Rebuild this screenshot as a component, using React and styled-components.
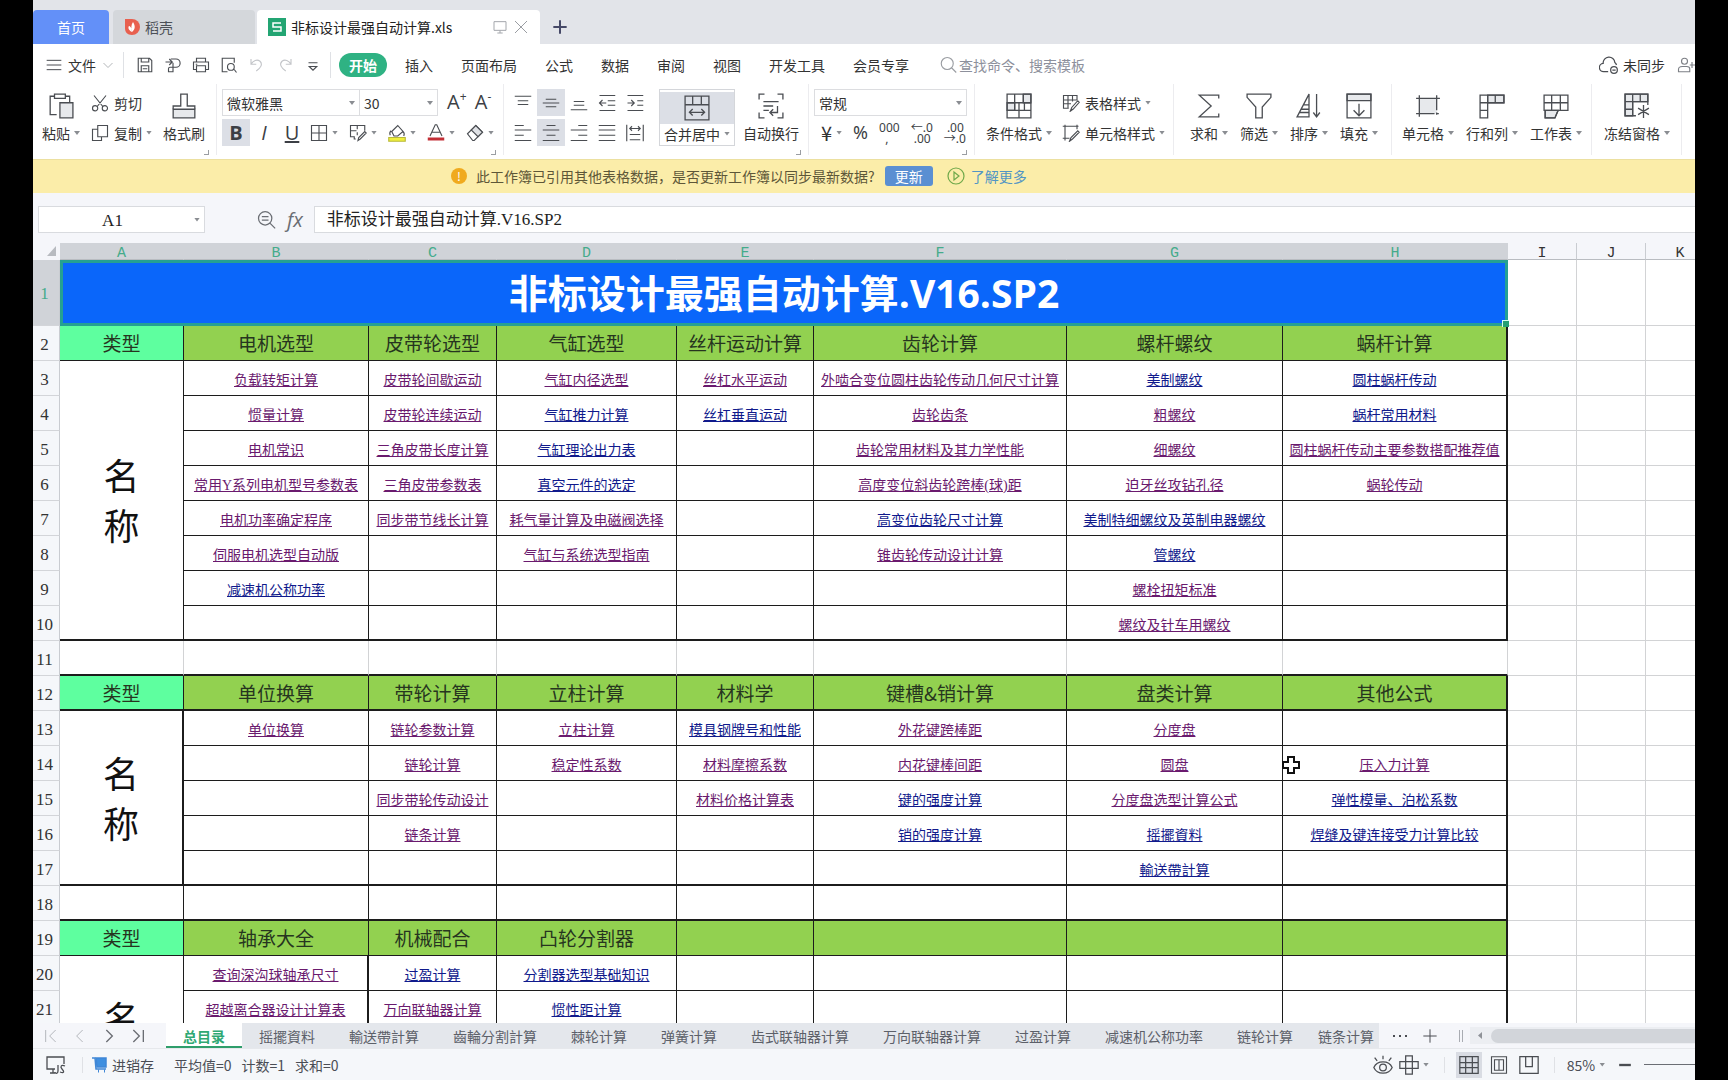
import React from "react";
import styled, { createGlobalStyle, css } from "styled-components";

const GlobalStyle = createGlobalStyle`
    * {
        box-sizing: border-box;
    }
    body {
        margin: 0;
        background: #000;
        color: #333;
        font-family: "Noto Sans CJK SC", "Open Sans", sans-serif;
        font-size: 14px;
        line-height: 20px;
    }
    button, input, select {
        margin: 0;
        padding: 0;
        border: 0;
        background: none;
        color: inherit;
        font: inherit;
    }
    button {
        white-space: nowrap;
    }
`;

const Window = styled.main`
    display: flex;
    flex-direction: column;
    height: 100vh;
    margin: 0 33px;
    overflow: hidden;
    background: #fff;
`;

/* ---------- shared bits ---------- */

const Svg = styled.svg`
    display: block;
    flex: none;
    width: ${p => p.$size || 18}px;
    height: ${p => p.$size || 18}px;
    fill: none;
    stroke: ${p => p.$color || "#4a4d52"};
    stroke-width: ${p => p.$weight || 1.5};
`;

const Caret = styled.i`
    flex: none;
    width: 6px;
    height: 4px;
    margin-left: 4px;
    background: #8a8d92;
    clip-path: polygon(0 0, 100% 0, 50% 100%);
`;

const Divider = styled.span`
    flex: none;
    width: 1px;
    height: ${p => p.$h || 26}px;
    background: #dfe1e5;
`;

const icons = {
    save: <path d="M3 3h15l3 3v15H3zM7 3v5h10V3M7 21v-8h10v8M9 17h6" />,
    exportPdf: <path d="M2 8h8M7 4l4 4-4 4M9 4h7a5.500 5.500 0 0 1 0 11h-4v6H6v-4a2 2 0 0 1 2-2h4V9" />,
    print: <path d="M6 8V3h12v5M6 18H2V8h20v10h-4M6 13h12v8H6zM5 11h2" />,
    preview: <path d="M10 21H3V3h16v6M19 18l3 4M19 14.500a4.500 4.500 0 1 1-9 0 4.500 4.500 0 0 1 9 0z" />,
    undo: <path d="M4 4v7h7M4 11c3-5 8-7 12-4 4 4 1 9-5 13" />,
    redo: <path d="M20 4v7h-7M20 11c-3-5-8-7-12-4-4 4-1 9 5 13" />,
    more: <path d="M6 9h12M7 14l5 5 5-5z" />,
    menu: <path d="M1 5h22M1 12h22M1 19h22" />,
    chevron: <path d="M3 8l9 9 9-9" />,
    search: <path d="M19 10a8 8 0 1 1-16 0 8 8 0 0 1 16 0zM17 16l6 6" />,
    cloud: <path d="M11 20H6a5 5 0 0 1-1-10 7 7 0 0 1 14-1 5 5 0 0 1 2 3M22 18a4 4 0 1 1-8 0 4 4 0 0 1 8 0zM16 18h4" />,
    person: <path d="M14 7a4 4 0 1 1-8 0 4 4 0 0 1 8 0zM2 21v-3c0-3 3-4 5-4h6c2 0 4 1 4 3v4zM17 12h7M20 8v8" />,
    screen: <path d="M3 4h18v13H3zM8 21h8M12 17v4" />,
    close: <path d="M3 3l18 18M21 3L3 21" />,
    plus: <path d="M12 2v20M2 12h20" />,
    paste: (
        <>
            <path d="M8 20H2V3h4M16 3h4v6M6 1h10v4H6z" />
            <path d="M11 9h12v14H11z" fill="#e7e9ec" />
        </>
    ),
    cut: <path d="M4 2l12 15M20 2L8 17M9 19a3.500 3.500 0 1 1-7 0 3.500 3.500 0 0 1 7 0zM22 19a3.500 3.500 0 1 1-7 0 3.500 3.500 0 0 1 7 0z" />,
    copy: <path d="M9 2h13v15H9zM9 7H2v15h12v-5" />,
    brush: (
        <>
            <path d="M2 15h20v8H2z" fill="#e7e9ec" />
            <path d="M2 15v-3h7V1h6v11h7v3" />
        </>
    ),
    borders: <path d="M2 2h20v20H2zM12 2v20M2 12h20" />,
    drawBorder: <path d="M9 20H7v-3H2V2h19v7M2 9h8M11 2v5M11 11v4M12 22l1-4 8-8 2 2-8 8z" />,
    fill: (
        <>
            <path d="M5 10l8-8 7 8-7 6H8zM20 10c2 2 2 4 1 6M4 9c-2 2-2 4-1 6" />
            <path d="M1 18h22v5H1z" fill="#f0f03c" stroke="#b8b83a" />
        </>
    ),
    fontColor: (
        <>
            <path d="M4 16l7-15h2l7 15M7 11h10" />
            <path d="M1 18h22v4H1z" fill="#c22f36" stroke="none" />
        </>
    ),
    eraser: (
        <>
            <path d="M2 13L13 2l9 9-11 11H9z" />
            <path d="M13 2l9 9-6 6-9-9z" fill="#dfe1e5" />
        </>
    ),
    alignTop: <path d="M1 3h22M5 9h14M5 14h14" />,
    alignMiddle: <path d="M5 7h14M1 12h22M5 17h14" />,
    alignBottom: <path d="M5 10h14M5 15h14M1 21h22" />,
    outdent: <path d="M2 2h21M13 9h10M13 15h10M2 22h21M11 12H2M6 8l-4 4 4 4" />,
    indent: <path d="M2 2h21M15 9h8M15 15h8M2 22h21M2 12h9M7 8l4 4-4 4" />,
    alignLeft: <path d="M1 2h12M1 8h22M1 15h12M1 22h22" />,
    alignCenter: <path d="M6 2h12M1 8h22M6 15h12M1 22h22" />,
    alignRight: <path d="M11 2h12M1 8h22M11 15h12M1 22h22" />,
    justify: <path d="M1 2h22M1 8h22M1 15h22M1 22h22" />,
    distribute: <path d="M1 1v22M23 1v22M5 14h14M5 21h14M5 6h14M8 3L5 6l3 3M16 3l3 3-3 3" />,
    merge: <path d="M1 1h22v22H1zM1 9h22M8 1v8M16 1v8M5 16h14M8 13l-3 3 3 3M16 13l3 3-3 3" />,
    wrap: <path d="M6 1H1v5M18 1h5v5M6 23H1v-5M18 23h5v-5M5 8h14M5 12h9M5 16h5M18 12v6h-6M14 15l-3 3 3 3" />,
    condition: (
        <>
            <path d="M1 9h7v7H1zM16 1h7v8h-7z" fill="#e7e9ec" />
            <path d="M1 1h22v22H1zM1 9h22M1 16h22M8 1v15M16 1v8M12 9v7M12 16v7M17 9v7" />
        </>
    ),
    tableStyle: <path d="M9 19H2V2h18v6M2 8h18M2 13h10M8 2v17M14 2v8M11 23l2-5 8-9 2 2-8 9z" />,
    cellStyle: <path d="M1 3h21M4 1v21M1 19h9M20 1v6M10 23l2-5 9-9 2 2-9 9z" />,
    sum: <path d="M21 5V2H3l11 10L3 22h18v-3" />,
    filter: <path d="M1 1h22v3l-8 9v10H9V13L1 4z" />,
    sort: <path d="M1 22L12 1v21zM7 11h5M5 15h7M3 18h9M19 1v21M16 18l3 4 3-4" />,
    fillDown: (
        <>
            <path d="M1 1h22v6H1z" fill="#e7e9ec" />
            <path d="M1 1h22v22H1zM12 10v10M7 16l5 5 5-5" />
        </>
    ),
    cell: (
        <>
            <path d="M4 5h16v14H4z" fill="#e7e9ec" stroke="none" />
            <path d="M1 5h22M1 19h17M4 2v20M20 2v14M20 18v2M22 19h-2" />
        </>
    ),
    rowCol: (
        <>
            <path d="M8 2h15v7H8z" fill="#e7e9ec" />
            <path d="M1 2h22v7H8v14H1zM1 9h7M1 16h7M8 2v7M15 2v7" />
        </>
    ),
    sheet: (
        <>
            <path d="M2 16h12l-3 7H2z" fill="#e7e9ec" />
            <path d="M1 2h22v14H1zM1 9h22M8 2v14M16 2v14M2 16v7h9l3-7" />
        </>
    ),
    freeze: (
        <>
            <path d="M1 1h21v7H8v13H1z" fill="#e7e9ec" />
            <path d="M22 11V1H1v20h10M1 8h21M1 15h7M8 1v20M15 1v7M18 11v12M13 14l10 6M23 14l-10 6" />
        </>
    ),
    zoomOut: <path d="M19 10a8 8 0 1 1-16 0 8 8 0 0 1 16 0zM17 16l6 6M7 8h8M7 12h8" />,
    first: <path d="M4 3v18M19 3l-9 9 9 9" />,
    prev: <path d="M16 3l-9 9 9 9" />,
    next: <path d="M8 3l9 9-9 9" />,
    last: <path d="M20 3v18M5 3l9 9-9 9" />,
    eye: (
        <path d="M1 15c4-9 18-9 22 0-4 9-18 9-22 0zM16 15a4 4 0 1 1-8 0 4 4 0 0 1 8 0zM12 5V1M5 7L2 3M19 7l3-4" />
    ),
    cross: <path d="M8 1h8v22H8zM1 8h22v8H1z" />,
    grid: <path d="M1 2h22v20H1zM1 9h22M1 15h22M8 2v20M16 2v20" />,
    page: <path d="M2 1h20v22H2zM6 5h12v14H6zM12 5v14" />,
    split: <path d="M1 2h22v20H1zM8 2v12h8V2" />,
    minus: <path d="M2 12h20" />,
};

function Icon({ name, size, color, weight }) {
    return (
        <Svg viewBox="0 0 24 24" $size={size} $color={color} $weight={weight} aria-hidden="true">
            {icons[name]}
        </Svg>
    );
}

/* ---------- document tabs ---------- */

const TabStrip = styled.nav`
    display: flex;
    align-items: flex-end;
    flex: none;
    height: 44px;
    background: #e2e4e9;
`;

const DocTab = styled.button`
    display: flex;
    align-items: center;
    height: 34px;
    padding: 0 11px;
    gap: 5px;
    border-radius: 4px 4px 0 0;
    background: #d4d7db;
    color: #4c5057;
    width: ${p => p.$width}px;
    margin-right: ${p => p.$after || 0}px;

    ${p => p.$kind === "home" && css`
        justify-content: center;
        background: #6390f8;
        color: #fff;
    `}
    ${p => p.$kind === "active" && css`
        background: #fff;
        color: #222;
    `}
`;

const TabName = styled.span`
    flex: 1;
    text-align: left;
`;

const NewTab = styled.button`
    display: flex;
    align-items: center;
    height: 34px;
    padding: 0 12px;
`;

/* ---------- menu ---------- */

const MenuBar = styled.div`
    display: flex;
    align-items: center;
    flex: none;
    height: 40px;
    padding: 2px 0 0 13px;
    overflow: hidden;
`;

const FileButton = styled.button`
    display: flex;
    align-items: center;
    gap: 6px;
    margin-right: 9px;
`;

const QuickTools = styled.div`
    display: flex;
    align-items: center;
    gap: 10px;
    padding: 0 8px 0 12px;
`;

const QuickButton = styled.button`
    display: flex;
`;

const Menus = styled.div`
    display: flex;
    gap: 28px;
    margin-left: 18px;
`;

const MenuItem = styled.button`
    line-height: 24px;
    ${p => p.$active && css`
        margin: 0 -10px;
        padding: 0 10px;
        border-radius: 12px;
        background: #2fb283;
        color: #fff;
        font-weight: bold;
    `}
`;

const Search = styled.label`
    display: flex;
    align-items: center;
    flex: 1;
    gap: 2px;
    margin-left: 30px;

    input {
        width: 200px;
        outline: none;
    }
    input::placeholder {
        color: #8d909c;
        opacity: 1;
    }
`;

const Sync = styled.button`
    display: flex;
    align-items: center;
    gap: 4px;
    margin-right: 12px;
`;

/* ---------- ribbon ---------- */

const Ribbon = styled.div`
    display: flex;
    flex: none;
    height: 75px;
    overflow: hidden;
`;

const Group = styled.section`
    position: relative;
    display: flex;
    flex: none;
    gap: ${p => p.$gap || 0}px;
    height: 71px;
    padding: 5px ${p => p.$right}px 0 ${p => p.$left}px;
    border-right: 1px solid #ececef;
`;

const Corner = styled.i`
    position: absolute;
    right: 7px;
    bottom: 0;
    width: 5px;
    height: 5px;
    border: solid #9a9da2;
    border-width: 0 1px 1px 0;
`;

const BigTool = styled.button`
    display: flex;
    flex-direction: column;
    align-items: center;
    height: 57px;
    padding-top: 4px;
`;

const BigLabel = styled.span`
    display: flex;
    align-items: center;
    margin-top: 4px;
`;

const MergeTool = styled.button`
    width: 76px;
    height: 57px;
    margin: 0 8px 0 10px;
    border: 1px solid #d4d6da;
    background: #fff;
`;

const MergeTop = styled.span`
    display: flex;
    justify-content: center;
    padding: 3px 0;
    background: #dcdfe6;
`;

const MergeLabel = styled.span`
    display: flex;
    align-items: center;
    justify-content: center;
`;

const Stack = styled.div`
    display: flex;
    flex-direction: column;
    gap: 3px;
`;

const Line = styled.div`
    display: flex;
    align-items: center;
    height: 27px;
    gap: ${p => p.$gap || 0}px;
    padding-left: ${p => p.$left || 0}px;
`;

const SmallTool = styled.button`
    display: flex;
    align-items: center;
`;

const SmallLabel = styled.span`
    margin-left: 5px;
`;

const SizeTool = styled.button`
    width: 18px;
`;

const Toggle = styled.button`
    display: flex;
    align-items: center;
    justify-content: center;
    width: 28px;
    height: 27px;
    background: ${p => (p.$on ? "#dcdfe6" : "none")};
`;

const Letter = styled.span`
    font-family: "Open Sans", sans-serif;
    font-size: 20px;
    color: #3c3f45;
    font-weight: ${p => (p.$bold ? 700 : 400)};
    font-style: ${p => (p.$italic ? "italic" : "normal")};
    text-decoration: ${p => (p.$underline ? "underline" : "none")};

    sup {
        font-size: 12px;
        line-height: 1px;
    }
`;

const Combo = styled.label`
    position: relative;
    display: flex;
    width: ${p => p.$width}px;
    height: 27px;
    border: 1px solid #dcdde0;
    margin-right: ${p => (p.$joined ? -1 : 0)}px;

    select {
        appearance: none;
        flex: 1;
        padding: 0 4px;
        outline: none;
    }
    i {
        position: absolute;
        right: 4px;
        top: 11px;
    }
`;

const NumTool = styled.button`
    color: #3c3f45;
    font-family: "Noto Sans", "Noto Sans CJK SC", sans-serif;
    font-size: ${p => p.$size || 12}px;
    line-height: 11px;
    text-align: left;
    white-space: pre;
`;

const Yen = styled.span`
    font-size: 20px;
`;

/* ---------- update notice ---------- */

const Notice = styled.div`
    display: flex;
    align-items: center;
    flex: none;
    height: 34px;
    padding: 0 0 2px 418px;
    border-top: 1px solid #ece0a0;
    background: #fbeda9;
    color: #5e5738;
    white-space: nowrap;
`;

const Alert = styled.span`
    width: 16px;
    height: 16px;
    margin-right: 9px;
    border-radius: 8px;
    background: #f0aa1e;
    color: #fff;
    font-size: 12px;
    line-height: 16px;
    text-align: center;
`;

const UpdateButton = styled.button`
    width: 48px;
    height: 20px;
    margin: 0 14px 0 10px;
    border-radius: 3px;
    background: #5a8fd2;
    color: #fff;
`;

const LearnMore = styled.a`
    display: flex;
    align-items: center;
    gap: 6px;
    color: #5295c4;
    text-decoration: none;
`;

/* ---------- formula bar ---------- */

const FormulaBar = styled.div`
    display: flex;
    align-items: center;
    flex: none;
    height: 50px;
    padding: 3px 0 0 5px;
    background: #f5f6fa;
`;

const NameBox = styled.label`
    display: flex;
    align-items: center;
    width: 167px;
    height: 27px;
    margin-right: 51px;
    padding-right: 4px;
    border: 1px solid #d9dbdf;
    background: #fff;

    input {
        flex: 1;
        min-width: 0;
        padding: 2px 4px 0 0;
        color: #222;
        font: 17px "Liberation Serif", serif;
        text-align: center;
        outline: none;
    }
`;

const Fx = styled.button`
    margin: 0 11px;
    color: #6a6d73;
    font: italic 20px "Open Sans", sans-serif;
`;

const FormulaInput = styled.input`
    && {
        flex: 1;
        height: 27px;
        padding: 0 12px 4px;
        border: 1px solid #d9dbdf;
        border-right: 0;
        background: #fff;
        color: #222;
        font: 17px "Liberation Serif", "Noto Sans CJK SC", serif;
        outline: none;
    }
`;

/* ---------- sheet ---------- */

const SheetArea = styled.div`
    position: relative;
    flex: 1;
    min-height: 0;
    overflow: hidden;
    background: #fff;
`;

const Sheet = styled.table`
    width: 1682px;
    table-layout: fixed;
    border-collapse: separate;
    border-spacing: 0;
`;

const ColHead = styled.th`
    height: 17px;
    padding: 6px 0 0;
    border-right: 1px solid ${p => (p.$on ? "#d0d3d8" : "#c9ccd1")};
    border-bottom: 1px solid #b9bcc1;
    background: ${p => (p.$on ? "#d0d3d8" : "#f5f6fa")};
    color: ${p => (p.$on ? "#45ab8b" : "#333")};
    font: 15px/10px "Liberation Mono", monospace;
`;

const CornerHead = styled.th`
    height: 17px;
    padding: 2px 4px 3px 14px;
    background: #f5f6fa;

    i {
        display: block;
        height: 10px;
        background: #b8bbc0;
        clip-path: polygon(100% 0, 100% 100%, 0 100%);
    }
`;

const RowHead = styled.th`
    padding: 3px 3px 0 0;
    border-right: 1px solid #c9ccd1;
    border-bottom: 1px solid #d3d5d9;
    background: ${p => (p.$on ? "#d0d3d8" : "#f5f7fa")};
    color: ${p => (p.$on ? "#45ab8b" : "#333")};
    font: 17px/20px "Liberation Serif", serif;
`;

const TitleCell = styled.td`
    position: relative;
    height: 66px;
    padding: 0;
    border: 3px solid #25a093;
    background: #0a66fa;
    color: #fff;
    font: bold 39px/50px "Open Sans", "Noto Sans CJK SC", sans-serif;
    text-align: center;

    &::after {
        content: "";
        position: absolute;
        right: -4px;
        bottom: -4px;
        width: 6px;
        height: 6px;
        border: solid #d8fff0;
        border-width: 1px 0 0 1px;
        background: #25a073;
    }
`;

const Cell = styled.td`
    height: 35px;
    padding: 4px 0 0;
    border: solid ${p => (p.$grid ? "#d2d3d5" : "#1c1c1c")};
    border-width: 0 ${p => p.$right || 1}px ${p => p.$bottom || 1}px 0;
    border-bottom-color: ${p => (p.$plain ? "#d2d3d5" : "#1c1c1c")};
    text-align: center;
    white-space: nowrap;
`;

const HeadCell = styled(Cell)`
    padding: 0;
    background: ${p => (p.$first ? "#5eff9f" : "#92d150")};
    color: #26351f;
    font-size: 19px;
    line-height: 28px;
`;

const NameCell = styled(Cell)`
    padding: 6px 0 0;
    color: #111;
    font: 36px/50px "Liberation Serif", "Noto Sans CJK SC", serif;
`;

const CellLink = styled.a`
    color: ${p => (p.$fresh ? "#101a8c" : "#6a1a6e")};
    font: 14px/20px "Liberation Serif", "Noto Sans CJK SC", serif;
    text-decoration: underline;
    text-underline-offset: 1px;
`;

const Pointer = styled.svg`
    position: absolute;
    left: 1249px;
    top: 513px;
    width: 18px;
    height: 18px;
`;

/* ---------- bottom bars ---------- */

const SheetTabs = styled.nav`
    display: flex;
    flex: none;
    height: 25px;
    background: #f5f6fa;
`;

const TabNav = styled.div`
    display: flex;
    align-items: center;
    flex: none;
    gap: 13px;
    width: 133px;
    padding-left: 10px;

    button {
        display: flex;
    }
`;

const TabList = styled.div`
    display: flex;
    flex: 1;
    min-width: 0;
    overflow: hidden;
    background: #e4e7ec;

    button:last-child {
        padding: 0 8px;
    }
`;

const SheetTab = styled.button`
    flex: none;
    padding: 0 17px;
    color: #5c6069;
    line-height: 24px;

    ${p => p.$active && css`
        background: #fff;
        color: #2fa873;
        font-weight: bold;
        box-shadow: inset 0 -2px #2f9e6b;
    `}
`;

const TabTools = styled.div`
    display: flex;
    align-items: center;
    flex: none;
    width: 316px;
    padding-left: 14px;

    button {
        display: flex;
        margin-right: 15px;
    }
`;

const Grip = styled.i`
    width: 4px;
    height: 12px;
    margin: 0 7px 0 6px;
    border: solid #a9acb2;
    border-width: 0 1px;
`;

const ScrollTrack = styled.div`
    display: flex;
    align-items: center;
    flex: 1;
    gap: 9px;
    height: 17px;
    padding-left: 8px;
    background: #eceef2;
`;

const ScrollArrow = styled.i`
    width: 4px;
    height: 7px;
    background: #8f9298;
    clip-path: polygon(100% 0, 100% 100%, 0 50%);
`;

const ScrollThumb = styled.div`
    flex: 1;
    height: 14px;
    border-radius: 7px 0 0 7px;
    background: #d2d5da;
`;

const StatusBar = styled.footer`
    display: flex;
    align-items: center;
    flex: none;
    height: 32px;
    padding-left: 13px;
    overflow: hidden;
    border-top: 1px solid #e6e8ec;
    background: #f5f7fa;
    color: #4a4d55;
    white-space: nowrap;
`;

const Cart = styled.button`
    display: flex;
    align-items: center;
    gap: 4px;
    margin: 0 20px 0 9px;
`;

const Totals = styled.div`
    display: flex;
    flex: 1;
    gap: 10px;
`;

const ViewButton = styled.button`
    display: flex;
    align-items: center;
    justify-content: center;
    width: ${p => p.$width || 26}px;
    height: 26px;
    margin-left: ${p => p.$before || 0}px;
    background: ${p => (p.$on ? "#d9dce3" : "none")};
`;

const ZoomSlider = styled.input`
    && {
        appearance: none;
        flex: none;
        width: 51px;
        height: 1px;
        margin-left: 6px;
        background: #6b6e74;
    }
    &::-webkit-slider-thumb {
        appearance: none;
        width: 1px;
        height: 1px;
    }
`;

/* ---------- data ---------- */

const colWidths = [27, 124, 185, 128, 180, 137, 253, 216, 225, 69, 69, 69];
const letters = "ABCDEFGHIJK".split("");

// links that have not been opened yet start with "*"
const rows = [
    { n: 2, head: ["类型", "电机选型", "皮带轮选型", "气缸选型", "丝杆运动计算", "齿轮计算", "螺杆螺纹", "蜗杆计算"] },
    { n: 3, name: 8, cells: ["负载转矩计算", "皮带轮间歇运动", "气缸内径选型", "丝杠水平运动", "外啮合变位圆柱齿轮传动几何尺寸计算", "*美制螺纹", "*圆柱蜗杆传动"] },
    { n: 4, cells: ["惯量计算", "皮带轮连续运动", "*气缸推力计算", "*丝杠垂直运动", "齿轮齿条", "粗螺纹", "*蜗杆常用材料"] },
    { n: 5, cells: ["电机常识", "三角皮带长度计算", "*气缸理论出力表", "", "齿轮常用材料及其力学性能", "细螺纹", "圆柱蜗杆传动主要参数搭配推荐值"] },
    { n: 6, cells: ["常用Y系列电机型号参数表", "三角皮带参数表", "*真空元件的选定", "", "高度变位斜齿轮跨棒(球)距", "迫牙丝攻钻孔径", "蜗轮传动"] },
    { n: 7, cells: ["电机功率确定程序", "同步带节线长计算", "耗气量计算及电磁阀选择", "", "*高变位齿轮尺寸计算", "*美制特细螺纹及英制电器螺纹", ""] },
    { n: 8, cells: ["伺服电机选型自动版", "", "气缸与系统选型指南", "", "锥齿轮传动设计计算", "*管螺纹", ""] },
    { n: 9, cells: ["*减速机公称功率", "", "", "", "", "螺栓扭矩标准", ""] },
    { n: 10, thick: true, cells: ["", "", "", "", "", "螺纹及针车用螺纹", ""] },
    { n: 11, thick: true, gap: true, light: true },
    { n: 12, thick: true, head: ["类型", "单位换算", "带轮计算", "立柱计算", "材料学", "键槽&销计算", "盘类计算", "其他公式"] },
    { n: 13, name: 5, nameRight: 2, cells: ["单位换算", "链轮参数计算", "立柱计算", "*模具钢牌号和性能", "外花键跨棒距", "分度盘", ""] },
    { n: 14, cells: ["", "链轮计算", "稳定性系数", "材料摩擦系数", "内花键棒间距", "圆盘", "压入力计算"] },
    { n: 15, cells: ["", "同步带轮传动设计", "", "材料价格计算表", "*键的强度计算", "分度盘选型计算公式", "*弹性模量、泊松系数"] },
    { n: 16, cells: ["", "链条计算", "", "", "*销的强度计算", "*摇擺資料", "*焊缝及键连接受力计算比较"] },
    { n: 17, thick: true, cells: ["", "", "", "", "", "*輸送帶計算", ""] },
    { n: 18, thick: true, gap: true },
    { n: 19, head: ["类型", "轴承大全", "机械配合", "凸轮分割器", "", "", "", ""] },
    { n: 20, name: 5, firstRight: 2, cells: ["查询深沟球轴承尺寸", "*过盈计算", "*分割器选型基础知识", "", "", "", ""] },
    { n: 21, firstRight: 2, cells: ["超越离合器设计计算表", "万向联轴器计算", "*惯性距计算", "", "", "", ""] },
    { n: 22, firstRight: 2, cells: ["", "", "", "", "", "", ""] },
    { n: 23, firstRight: 2, cells: ["", "", "", "", "", "", ""] },
    { n: 24, firstRight: 2, cells: ["", "", "", "", "", "", ""] },
];

const sheetTabs = ["总目录", "摇擺資料", "輸送帶計算", "齒輪分割計算", "棘轮计算", "弹簧计算", "齿式联轴器计算", "万向联轴器计算", "过盈计算", "减速机公称功率", "链轮计算", "链条计算"];
const menus = ["开始", "插入", "页面布局", "公式", "数据", "审阅", "视图", "开发工具", "会员专享"];

/* ---------- components ---------- */

function Big({ icon, label, caret = true }) {
    return (
        <BigTool>
            <Icon name={icon} size={26} weight={1.2} />
            <BigLabel>{label}{caret && <Caret />}</BigLabel>
        </BigTool>
    );
}

function Small({ icon, label, caret }) {
    return (
        <SmallTool aria-label={label || icon}>
            <Icon name={icon} />
            {label && <SmallLabel>{label}</SmallLabel>}
            {caret && <Caret />}
        </SmallTool>
    );
}

function Picker({ label, value, width, joined }) {
    return (
        <Combo $width={width} $joined={joined}>
            <select aria-label={label} defaultValue={value}>
                <option>{value}</option>
            </select>
            <Caret />
        </Combo>
    );
}

function Extras() {
    return <><Cell $grid $plain /><Cell $grid $plain /><Cell $grid $plain /></>;
}

function SheetRow({ row }) {
    const bottom = row.thick ? 2 : 1;

    return (
        <tr>
            <RowHead>{row.n}</RowHead>
            {row.head && row.head.map((text, i) => (
                <HeadCell key={i} $first={i === 0} $bottom={bottom} $right={i === 7 ? 2 : 1}>{text}</HeadCell>
            ))}
            {row.gap && letters.slice(0, 8).map((l, i) => (
                <Cell key={l} $grid={row.light} $bottom={bottom} $right={i === 7 && !row.light ? 2 : 1} />
            ))}
            {row.name && (
                <NameCell rowSpan={row.name} $bottom={2} $right={row.nameRight}>名<br />称</NameCell>
            )}
            {row.cells && row.cells.map((text, i) => (
                <Cell key={i} $bottom={bottom} $right={i === 6 ? 2 : i === 0 ? row.firstRight : 1}>
                    {text && (
                        <CellLink href="#" $fresh={text[0] === "*"}>{text.replace("*", "")}</CellLink>
                    )}
                </Cell>
            ))}
            <Extras />
        </tr>
    );
}

function RibbonBar() {
    return (
        <Ribbon>
            <Group $left={9} $right={11} $gap={11}>
                <Big icon="paste" label="粘贴" />
                <Stack>
                    <Line><Small icon="cut" label="剪切" /></Line>
                    <Line><Small icon="copy" label="复制" caret /></Line>
                </Stack>
                <Big icon="brush" label="格式刷" caret={false} />
                <Corner />
            </Group>

            <Group $left={5} $right={9}>
                <Stack>
                    <Line>
                        <Picker label="字体" value="微软雅黑" width={138} joined />
                        <Picker label="字号" value="30" width={79} />
                        <Line $gap={9} $left={9}>
                            <SizeTool><Letter>A<sup>+</sup></Letter></SizeTool>
                            <SizeTool><Letter>A<sup>-</sup></Letter></SizeTool>
                        </Line>
                    </Line>
                    <Line>
                        <Toggle $on><Letter $bold>B</Letter></Toggle>
                        <Toggle><Letter $italic>I</Letter></Toggle>
                        <Toggle><Letter $underline>U</Letter></Toggle>
                        <Line $gap={11} $left={4}>
                            <Small icon="borders" caret />
                            <Small icon="drawBorder" caret />
                            <Small icon="fill" caret />
                            <Small icon="fontColor" caret />
                            <Small icon="eraser" caret />
                        </Line>
                    </Line>
                </Stack>
                <Corner />
            </Group>

            <Group $left={5} $right={9}>
                <Stack>
                    <Line>
                        {["alignTop", "alignMiddle", "alignBottom", "outdent", "indent"].map(n => (
                            <Toggle key={n} aria-label={n} $on={n === "alignMiddle"}><Icon name={n} /></Toggle>
                        ))}
                    </Line>
                    <Line>
                        {["alignLeft", "alignCenter", "alignRight", "justify", "distribute"].map(n => (
                            <Toggle key={n} aria-label={n} $on={n === "alignCenter"}><Icon name={n} /></Toggle>
                        ))}
                    </Line>
                </Stack>
                <MergeTool>
                    <MergeTop><Icon name="merge" size={26} weight={1.2} /></MergeTop>
                    <MergeLabel>合并居中<Caret /></MergeLabel>
                </MergeTool>
                <Big icon="wrap" label="自动换行" caret={false} />
                <Corner />
            </Group>

            <Group $left={5} $right={7}>
                <Stack>
                    <Picker label="数字格式" value="常规" width={153} />
                    <Line $gap={11} $left={7}>
                        <SmallTool aria-label="货币"><Yen>¥</Yen><Caret /></SmallTool>
                        <NumTool $size={18}>%</NumTool>
                        <NumTool>{"000\n  ,"}</NumTool>
                        <NumTool>{"←.0\n .00"}</NumTool>
                        <NumTool>{" .00\n→.0"}</NumTool>
                    </Line>
                </Stack>
                <Corner />
            </Group>

            <Group $left={11} $right={8} $gap={10}>
                <Big icon="condition" label="条件格式" />
                <Stack>
                    <Line><Small icon="tableStyle" label="表格样式" caret /></Line>
                    <Line><Small icon="cellStyle" label="单元格样式" caret /></Line>
                </Stack>
            </Group>

            <Group $left={16} $right={13} $gap={12}>
                <Big icon="sum" label="求和" />
                <Big icon="filter" label="筛选" />
                <Big icon="sort" label="排序" />
                <Big icon="fillDown" label="填充" />
            </Group>

            <Group $left={10} $right={9} $gap={12}>
                <Big icon="cell" label="单元格" />
                <Big icon="rowCol" label="行和列" />
                <Big icon="sheet" label="工作表" />
            </Group>

            <Group $left={12} $right={11}>
                <Big icon="freeze" label="冻结窗格" />
            </Group>
        </Ribbon>
    );
}

function App() {
    return (
        <Window>
            <GlobalStyle />

            <TabStrip>
                <DocTab $kind="home" $width={76} $after={4}>首页</DocTab>
                <DocTab $width={142} $after={2}>
                    <Svg viewBox="0 0 16 16" $size={16}>
                        <path d="M1 0h7a8 8 0 0 1 0 16C3 16 1 13 1 9z" fill="#e8604f" stroke="none" />
                        <path d="M8 13c-4-2-4-5-3-6 1 0 3 2 3 6zm0 0c4-3 3-7 1-10-2 3-2 6-1 10z" fill="#fff" stroke="none" />
                    </Svg>
                    <TabName>稻壳</TabName>
                </DocTab>
                <DocTab $kind="active" $width={283}>
                    <Svg viewBox="0 0 18 18" $size={18} $color="#fff">
                        <path d="M0 0h18v18H0z" fill="#23a573" stroke="none" />
                        <path d="M13 5H5v4h8v4H5" />
                    </Svg>
                    <TabName>非标设计最强自动计算.xls</TabName>
                    <Icon name="screen" size={16} color="#a4a7ac" />
                    <Icon name="close" size={16} color="#9a9da2" />
                </DocTab>
                <NewTab aria-label="新建标签"><Icon name="plus" size={16} color="#454867" weight={3} /></NewTab>
            </TabStrip>

            <MenuBar>
                <FileButton>
                    <Icon name="menu" size={16} />
                    文件
                    <Icon name="chevron" size={12} color="#9a9da2" />
                </FileButton>
                <Divider />
                <QuickTools>
                    {["save", "exportPdf", "print", "preview", "undo", "redo", "more"].map(n => (
                        <QuickButton key={n} aria-label={n}>
                            <Icon name={n} color={n === "undo" || n === "redo" ? "#c3c5c9" : undefined} />
                        </QuickButton>
                    ))}
                </QuickTools>
                <Divider />
                <Menus>
                    {menus.map((m, i) => <MenuItem key={m} $active={i === 0}>{m}</MenuItem>)}
                </Menus>
                <Search>
                    <Icon name="search" color="#9a9da2" />
                    <input placeholder="查找命令、搜索模板" />
                </Search>
                <Sync><Icon name="cloud" size={20} />未同步</Sync>
                <QuickButton aria-label="协作"><Icon name="person" color="#7c7f85" /></QuickButton>
            </MenuBar>

            <RibbonBar />

            <Notice>
                <Alert>!</Alert>
                此工作簿已引用其他表格数据，是否更新工作簿以同步最新数据?
                <UpdateButton>更新</UpdateButton>
                <LearnMore href="#">
                    <Svg viewBox="0 0 18 18" $size={18} $color="#6fa84a" $weight={1.2}>
                        <circle cx="9" cy="9" r="8" />
                        <path d="M7 5v8l5-4z" />
                    </Svg>
                    了解更多
                </LearnMore>
            </Notice>

            <FormulaBar>
                <NameBox>
                    <input aria-label="名称框" defaultValue="A1" />
                    <Caret />
                </NameBox>
                <Icon name="zoomOut" size={20} color="#6a6d73" />
                <Fx>fx</Fx>
                <FormulaInput aria-label="编辑栏" defaultValue="非标设计最强自动计算.V16.SP2" />
            </FormulaBar>

            <SheetArea>
                <Sheet>
                    <colgroup>
                        {colWidths.map((w, i) => <col key={i} style={{ width: w }} />)}
                    </colgroup>
                    <thead>
                        <tr>
                            <CornerHead><i /></CornerHead>
                            {letters.map((l, i) => <ColHead key={l} $on={i < 8}>{l}</ColHead>)}
                        </tr>
                    </thead>
                    <tbody>
                        <tr>
                            <RowHead $on>1</RowHead>
                            <TitleCell colSpan={8}>非标设计最强自动计算.V16.SP2</TitleCell>
                            <Extras />
                        </tr>
                        {rows.map(row => <SheetRow key={row.n} row={row} />)}
                    </tbody>
                </Sheet>
                <Pointer viewBox="0 0 18 18">
                    <path d="M6 1h6v5h5v6h-5v5H6v-5H1V6h5z" fill="#fff" stroke="#111" strokeWidth="2" />
                </Pointer>
            </SheetArea>

            <SheetTabs>
                <TabNav>
                    <button aria-label="第一个"><Icon name="first" size={16} color="#b4b7bc" /></button>
                    <button aria-label="上一个"><Icon name="prev" size={16} color="#b4b7bc" /></button>
                    <button aria-label="下一个"><Icon name="next" size={16} color="#6a6d73" weight={2} /></button>
                    <button aria-label="最后一个"><Icon name="last" size={16} color="#6a6d73" weight={2} /></button>
                </TabNav>
                <TabList>
                    {sheetTabs.map((t, i) => <SheetTab key={t} $active={i === 0}>{t}</SheetTab>)}
                </TabList>
                <TabTools>
                    <button aria-label="更多工作表">
                        <Svg viewBox="0 0 14 14" $size={14} $weight={2}>
                            <path d="M0 7h2M6 7h2M12 7h2" />
                        </Svg>
                    </button>
                    <button aria-label="新建工作表"><Icon name="plus" size={16} /></button>
                    <Grip />
                    <ScrollTrack><ScrollArrow /><ScrollThumb /></ScrollTrack>
                </TabTools>
            </SheetTabs>

            <StatusBar>
                <Svg viewBox="0 0 20 20" $size={20} $weight={1.3}>
                    <path d="M9 14H1V2h14M7 14v4M4 18h5M15 2h3v7M12 10v6c0 3-3 3-3 1M19 11c-4-2-5 1-3 3s3 5-2 3" />
                </Svg>
                <Line $left={16}><Divider $h={16} /></Line>
                <Cart>
                    <Svg viewBox="0 0 16 16" $size={16} $color="#3f87d6">
                        <path d="M0 1h3l1 11h10" />
                        <path d="M4 1h10v9H5z" fill="#3f8fe0" />
                        <path d="M6 14h1M12 14h1" strokeWidth="3" />
                    </Svg>
                    进销存
                </Cart>
                <Totals>
                    <span>平均值=0</span>
                    <span>计数=1</span>
                    <span>求和=0</span>
                </Totals>
                <ViewButton aria-label="护眼模式"><Icon name="eye" size={20} /></ViewButton>
                <ViewButton aria-label="阅读模式" $width={36}><Icon name="cross" size={20} /><Caret /></ViewButton>
                <Line $left={12}><Divider $h={16} /></Line>
                <ViewButton aria-label="普通视图" $before={11} $on><Icon name="grid" size={20} /></ViewButton>
                <ViewButton aria-label="页面布局视图" $before={4}><Icon name="page" /></ViewButton>
                <ViewButton aria-label="分页预览" $before={4}><Icon name="split" size={20} /></ViewButton>
                <Line $left={12}><Divider $h={16} /></Line>
                <ViewButton $before={11} $width={40}>85%<Caret /></ViewButton>
                <ViewButton aria-label="缩小" $before={6}><Icon name="minus" size={14} weight={4} /></ViewButton>
                <ZoomSlider type="range" aria-label="缩放" defaultValue="100" />
            </StatusBar>
        </Window>
    );
}

export default App;
